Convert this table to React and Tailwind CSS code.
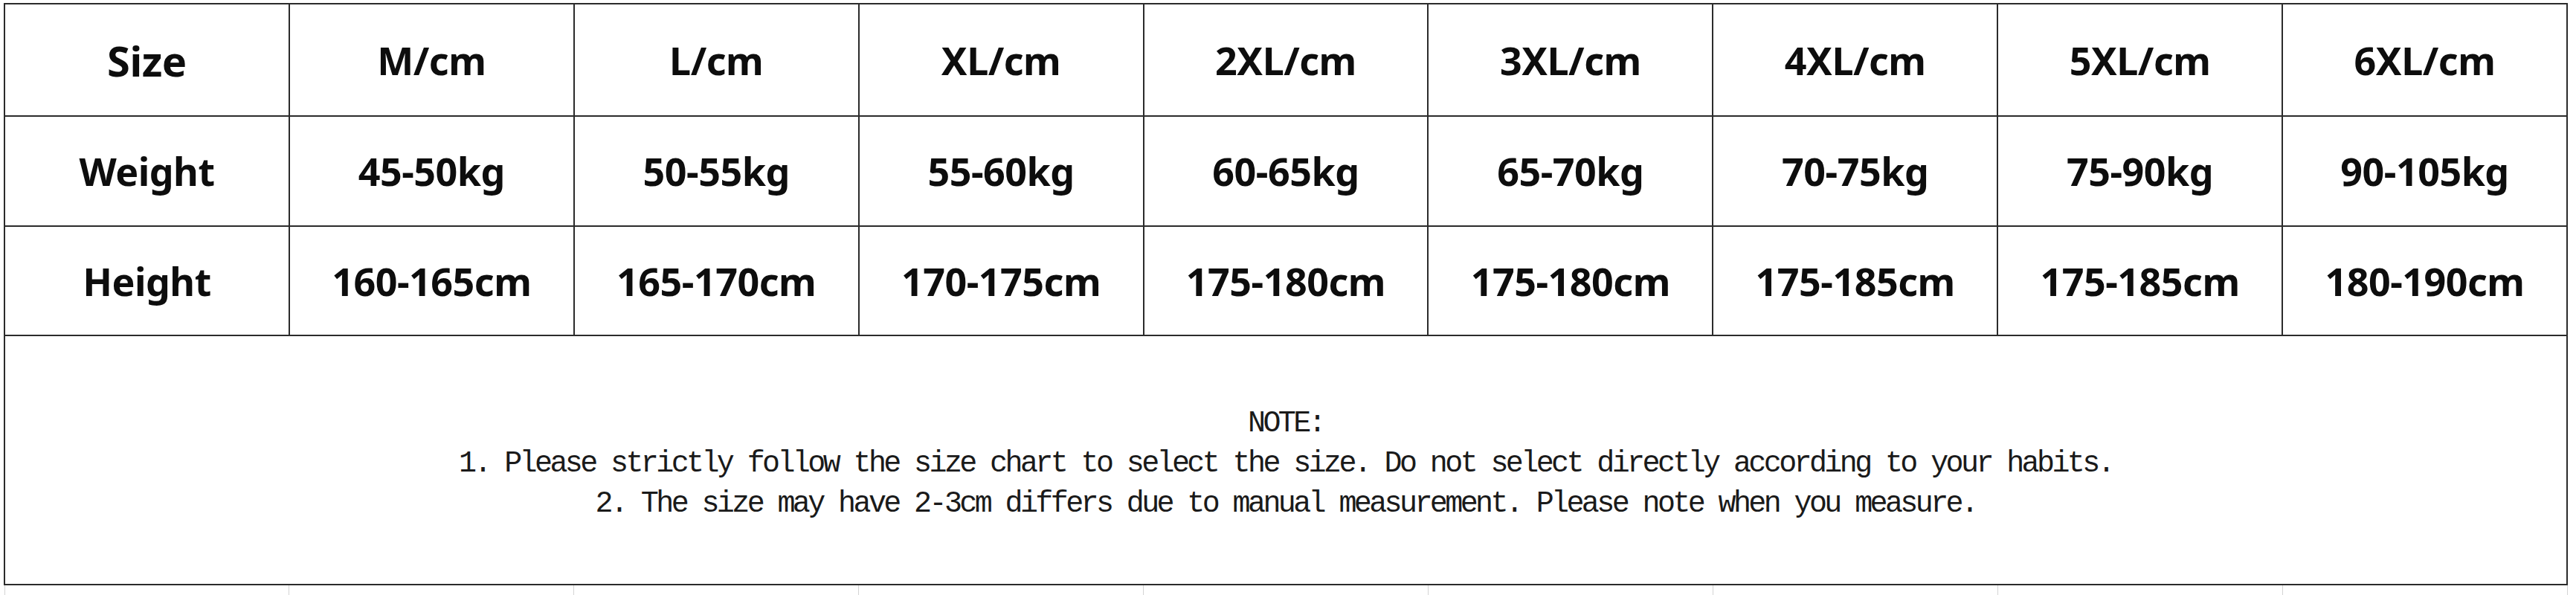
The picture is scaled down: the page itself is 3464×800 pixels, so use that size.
import React from "react";

const headers = ["Size", "M/cm", "L/cm", "XL/cm", "2XL/cm", "3XL/cm", "4XL/cm", "5XL/cm", "6XL/cm"];
const weights = ["Weight", "45-50kg", "50-55kg", "55-60kg", "60-65kg", "65-70kg", "70-75kg", "75-90kg", "90-105kg"];
const heights = ["Height", "160-165cm", "165-170cm", "170-175cm", "175-180cm", "175-180cm", "175-185cm", "175-185cm", "180-190cm"];

const cell =
  "border-2 border-[#2b2b2b] text-center align-middle text-[52px] font-bold text-[#0d0d0d] leading-none tracking-[-0.5px]";

export default function App() {
  return (
    <div className="w-[3464px] h-[800px] bg-white overflow-hidden pt-[4px] pl-[5px]">
      <table
        className="table-fixed border-collapse w-[3448px]"
        style={{ fontFamily: '"Noto Sans", "Open Sans", sans-serif' }}
      >
        <tbody>
          <tr className="h-[151px]">
            {headers.map((h, i) => (
              <td key={i} className={i === 0 ? cell + " text-[56px]" : cell}>
                {h}
              </td>
            ))}
          </tr>
          <tr className="h-[148px]">
            {weights.map((w, i) => (
              <td key={i} className={cell}>
                {w}
              </td>
            ))}
          </tr>
          <tr className="h-[147px]">
            {heights.map((v, i) => (
              <td key={i} className={cell}>
                {v}
              </td>
            ))}
          </tr>

          {/* NOTE ROW */}
          <tr className="h-[335px]">
            <td colSpan={9} className="border-2 border-[#2b2b2b] align-middle">
              <div
                className="flex flex-col items-center text-[40px] leading-[54px] tracking-[-3.6px] text-[#1a1a1a] whitespace-pre pt-[10px]"
                style={{ fontFamily: '"Liberation Mono", "DejaVu Sans Mono", monospace' }}
              >
                <span>NOTE:</span>
                <span>1. Please strictly follow the size chart to select the size. Do not select directly according to your habits.</span>
                <span>2. The size may have 2-3cm differs due to manual measurement. Please note when you measure.</span>
              </div>
            </td>
          </tr>

          {/* faint next row */}
          <tr className="h-[20px]">
            {headers.map((_, i) => (
              <td key={i} className="border border-[#d4d4d4]"></td>
            ))}
          </tr>
        </tbody>
      </table>
    </div>
  );
}
